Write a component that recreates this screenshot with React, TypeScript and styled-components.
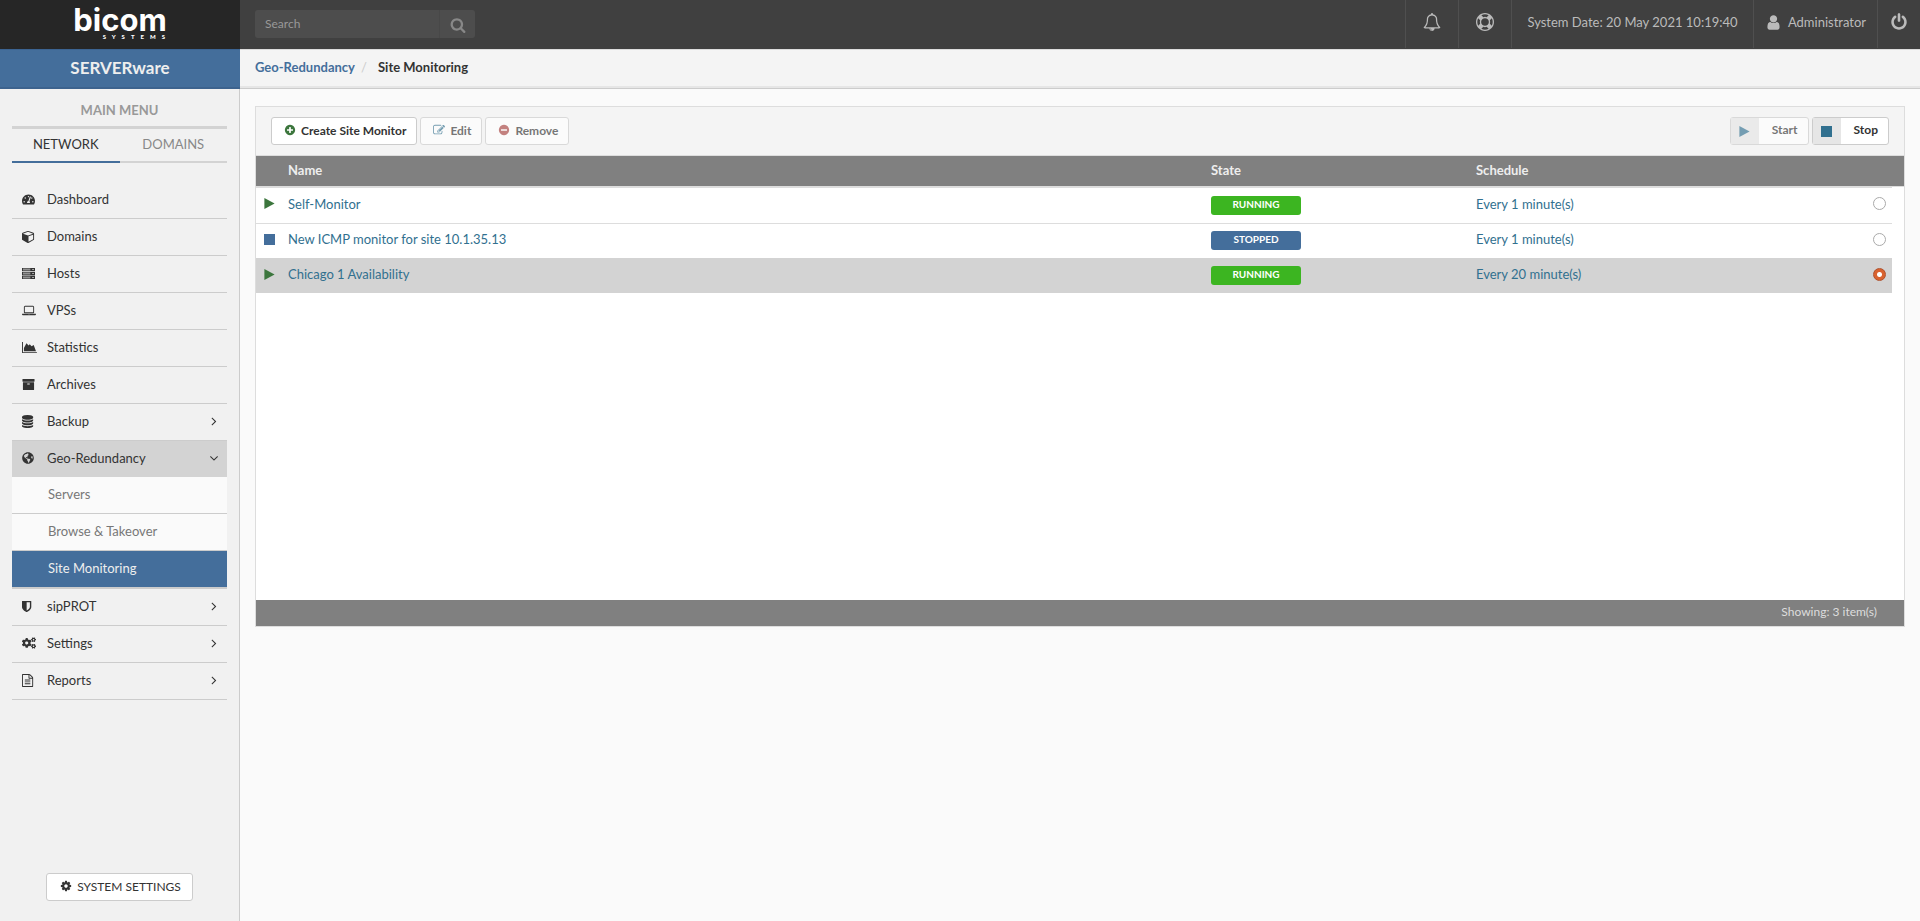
import React, { useState } from "react";
import styled, { createGlobalStyle, css } from "styled-components";
import { FaTachometerAlt, FaGlobeAmericas, FaCogs } from "react-icons/fa";

const Global = createGlobalStyle`
  * { box-sizing: border-box; }
  html, body { margin: 0; padding: 0; }
  body {
    background: #fafafa;
    color: #333;
    font-family: Lato, "Liberation Sans", sans-serif;
    font-size: 13px;
    line-height: 20px;
  }
  button, input { font-family: inherit; }
  a { text-decoration: none; }
`;

/* ---------- icons ---------- */

const DISC =
  "q0 209-103 385.500t-279.500 279.500-385.500 103-385.500-103-279.500-279.500-103-385.500 103-385.500 279.500-279.500 385.500-103 385.500 103 279.500 279.500 103 385.500z";

const ICONS = {
  power:
    "M1664 896q0 156-61 298t-164 245-245 164-298 61-298-61-245-164-164-245-61-298q0-182 80.500-343t226.500-270q43-32 95.500-25t83.500 50q32 42 24.500 94.500t-49.500 84.500q-98 74-151.500 181t-53.500 228q0 104 40.500 198.500t109.500 163.500 163.500 109.500 198.500 40.500 198.500-40.500 163.500-109.500 109.500-163.500 40.500-198.500q0-121-53.500-228t-151.500-181q-42-32-49.500-84.500t24.500-94.500q31-43 84-50t95 25q146 109 226.500 270t80.500 343zm-640-768v640q0 52-38 90t-90 38-90-38-38-90v-640q0-52 38-90t90-38 90 38 38 90z",
  search:
    "M1216 832q0-185-131.500-316.500t-316.500-131.500-316.500 131.500-131.500 316.500 131.500 316.500 316.500 131.500 316.500-131.500 131.500-316.500zm512 832q0 52-38 90t-90 38q-54 0-90-38l-343-342q-179 124-399 124-143 0-273.500-55.500t-225-150-150-225-55.500-273.500 55.500-273.500 150-225 225-150 273.500-55.500 273.500 55.500 225 150 150 225 55.500 273.500q0 220-124 399l343 343q37 37 37 90z",
  plus:
    "M1344 960v-128q0-26-19-45t-45-19h-256v-256q0-26-19-45t-45-19h-128q-26 0-45 19t-19 45v256h-256q-26 0-45 19t-19 45v128q0 26 19 45t45 19h256v256q0 26 19 45t45 19h128q26 0 45-19t19-45v-256h256q26 0 45-19t19-45zm320-64" + DISC,
  minus:
    "M1344 960v-128q0-26-19-45t-45-19h-768q-26 0-45 19t-19 45v128q0 26 19 45t45 19h768q26 0 45-19t19-45zm320-64" + DISC,
  angleRight:
    "M1171 960q0 13-10 23l-466 466q-10 10-23 10t-23-10l-50-50q-10-10-10-23t10-23l393-393-393-393q-10-10-10-23t10-23l50-50q10-10 23-10t23 10l466 466q10 10 10 23z",
  angleDown:
    "M1395 736q0 13-10 23l-466 466q-10 10-23 10t-23-10l-466-466q-10-10-10-23t10-23l50-50q10-10 23-10t23 10l393 393 393-393q10-10 23-10t23 10l50 50q10 10 10 23z",
  cog:
    "M1152 896q0-106-75-181t-181-75-181 75-75 181 75 181 181 75 181-75 75-181zm512-109v222q0 12-8 23t-20 13l-185 28q-19 54-39 91 35 50 107 138 10 12 10 25t-9 23q-27 37-99 108t-94 71q-12 0-26-9l-138-108q-44 23-91 38-16 136-29 186-7 28-36 28h-222q-14 0-24.500-8.500t-11.500-21.500l-28-184q-49-16-90-37l-141 107q-10 9-25 9-14 0-25-11-126-114-165-168-7-10-7-23 0-12 8-23 15-21 51-66.500t54-70.500q-27-50-41-99l-183-27q-13-2-21-12.500t-8-23.500v-222q0-12 8-23t19-13l186-28q14-46 39-92-40-57-107-138-10-12-10-24 0-10 9-23 26-36 98.500-107.500t94.500-71.500q13 0 26 10l138 107q44-23 91-38 16-136 29-186 7-28 36-28h222q14 0 24.500 8.500t11.500 21.500l28 184q49 16 90 37l142-107q9-9 24-9 13 0 25 10 129 119 165 170 7 8 7 22 0 12-8 23-15 21-51 66.500t-54 70.500q26 50 41 98l183 28q13 2 21 12.500t8 23.500z",
  user:
    "M1536 1399q0 109-62.500 187t-150.500 78h-854q-88 0-150.500-78t-62.500-187q0-85 8.500-160.500t31.500-152 58.500-131 94-89 134.500-34.500q131 128 313 128t313-128q76 0 134.500 34.500t94 89 58.500 131 31.500 152 8.500 160.500zm-256-887q0 159-112.500 271.500t-271.500 112.500-271.500-112.500-112.500-271.500 112.500-271.500 271.500-112.500 271.500 112.500 112.500 271.500z",
  lifeRing:
    "M896 0q182 0 348 71t286 191 191 286 71 348-71 348-191 286-286 191-348 71-348-71-286-191-191-286-71-348 71-348 191-286 286-191 348-71zm0 128q-190 0-361 90l194 194q82-28 167-28t167 28l194-194q-171-90-361-90zm-678 1129l194-194q-28-82-28-167t28-167l-194-194q-90 171-90 361t90 361zm678 407q190 0 361-90l-194-194q-82 28-167 28t-167-28l-194 194q171 90 361 90zm0-384q159 0 271.500-112.500t112.500-271.500-112.500-271.500-271.500-112.500-271.500 112.500-112.500 271.500 112.500 271.500 271.500 112.500zm484-217l194 194q90-171 90-361t-90-361l-194 194q28 82 28 167t-28 167z",
  bell:
    "M912 1696q0-16-16-16-59 0-101.500-42.500t-42.500-101.500q0-16-16-16t-16 16q0 73 51.500 124.500t124.500 51.500q16 0 16-16zm-666-288h1300q-266-300-266-832 0-51-24-105t-69-103-121.500-80.500-169.500-31.500-169.500 31.500-121.500 80.500-69 103-24 105q0 532-266 832zm1482 0q0 52-38 90t-90 38h-448q0 106-75 181t-181 75-181-75-75-181h-448q-52 0-90-38t-38-90q50-42 91-88t85-119.500 74.500-158.500 50-206 19.500-260q0-152 117-282.500t307-158.500q-8-19-8-39 0-40 28-68t68-28 68 28 28 68q0 20-8 39 190 28 307 158.500t117 282.500q0 139 19.500 260t50 206 74.500 158.500 85 119.500 91 88z",
  edit:
    "M888 1184l116-116-152-152-116 116v56h96v96h56zm440-720q-16-16-33 1l-350 350q-17 17-1 33t33-1l350-350q17-17 1-33zm80 594v190q0 119-84.500 203.500t-203.500 84.500h-832q-119 0-203.500-84.500t-84.500-203.500v-832q0-119 84.500-203.500t203.500-84.500h832q63 0 117 25 15 7 18 23 3 17-9 29l-49 49q-14 14-32 8-23-6-45-6h-832q-66 0-113 47t-47 113v832q0 66 47 113t113 47h832q66 0 113-47t47-113v-126q0-13 9-22l64-64q15-15 35-7t20 29zm-96-738l288 288-672 672h-288v-288zm444 132l-92 92-288-288 92-92q28-28 68-28t68 28l152 152q28 28 28 68t-28 68z",
  cube:
    "M896 1629l640-349v-636l-640 233v752zm-64-865l698-254-698-254-698 254zm832-252v768q0 35-18 65t-49 47l-704 384q-28 16-61 16t-61-16l-704-384q-31-17-49-47t-18-65v-768q0-40 23-73t61-47l704-256q22-8 44-8t44 8l704 256q38 14 61 47t23 73z",
  server:
    "M0 128h1792v448h-1792zM128 256v64h1024v-64zM128 384v64h1024v-64zM1440 288v128h160v-128zM0 672h1792v448h-1792zM128 800v64h1024v-64zM128 928v64h1024v-64zM1440 832v128h160v-128zM0 1216h1792v448h-1792zM128 1344v64h1024v-64zM128 1472v64h1024v-64zM1440 1376v128h160v-128z",
  laptop:
    "M416 1280q-66 0-113-47t-47-113v-704q0-66 47-113t113-47h1088q66 0 113 47t47 113v704q0 66-47 113t-113 47h-1088zm-32-864v704q0 13 9.500 22.500t22.500 9.500h1088q13 0 22.500-9.500t9.500-22.500v-704q0-13-9.500-22.500t-22.500-9.500h-1088q-13 0-22.500 9.500t-9.500 22.500zm1376 928h160v96q0 40-47 68t-113 28h-1600q-66 0-113-28t-47-68v-96h1760zm-720 96q16 0 16-16t-16-16h-160q-16 0-16 16t16 16h160z",
  area:
    "M2048 1536v128h-2048v-1536h128v1408h1920zM256 1408v-448l352-640 288 288 160-160 256 288 288-192 320 864z",
  archive:
    "M1088 832q0-26-19-45t-45-19h-256q-26 0-45 19t-19 45 19 45 45 19h256q26 0 45-19t19-45zm576-192v960q0 26-19 45t-45 19h-1408q-26 0-45-19t-19-45v-960q0-26 19-45t45-19h1408q26 0 45 19t19 45zm64-448v256q0 26-19 45t-45 19h-1536q-26 0-45-19t-19-45v-256q0-26 19-45t45-19h1536q26 0 45 19t19 45z",
  database:
    "M896 768q237 0 443-43t325-127v170q0 69-103 128t-280 93.500-385 34.500-385-34.500-280-93.500-103-128v-170q119 84 325 127t443 43zm0 768q237 0 443-43t325-127v170q0 69-103 128t-280 93.500-385 34.500-385-34.500-280-93.500-103-128v-170q119 84 325 127t443 43zm0-384q237 0 443-43t325-127v170q0 69-103 128t-280 93.500-385 34.500-385-34.500-280-93.500-103-128v-170q119 84 325 127t443 43zm0-1152q208 0 385 34.500t280 93.500 103 128v128q0 69-103 128t-280 93.500-385 34.500-385-34.500-280-93.500-103-128v-128q0-69 103-128t280-93.500 385-34.500z",
  shield:
    "M1344 960v-640h-448v1137q119-63 213-137 235-184 235-360zm192-768v768q0 86-33.500 170.500t-83 150-118 127.500-126.500 103-121 77.500-89.500 49.500-42.500 20q-12 6-26 6t-26-6q-16-7-42.500-20t-89.500-49.500-121-77.500-126.500-103-118-127.500-83-150-33.500-170.500v-768q0-26 19-45t45-19h1152q26 0 45 19t19 45z",
  file:
    "M1596 380q28 28 48 76t20 88v1152q0 40-28 68t-68 28h-1344q-40 0-68-28t-28-68v-1600q0-40 28-68t68-28h896q40 0 88 20t76 48zm-444-244v376h376q-10-29-22-41l-313-313q-12-12-41-22zm384 1528v-1024h-416q-40 0-68-28t-28-68v-416h-768v1536h1280zm-1024-864q0-14 9-23t23-9h704q14 0 23 9t9 23v64q0 14-9 23t-23 9h-704q-14 0-23-9t-9-23v-64zm736 224q14 0 23 9t9 23v64q0 14-9 23t-23 9h-704q-14 0-23-9t-9-23v-64q0-14 9-23t23-9h704zm0 256q14 0 23 9t9 23v64q0 14-9 23t-23 9h-704q-14 0-23-9t-9-23v-64q0-14 9-23t23-9h704z",
  play: "M64 0l1664 896-1664 896z",
  stop: "M0 0h1792v1792h-1792z",
};

type IconName = keyof typeof ICONS;

const Svg = styled.svg`
  display: block;
  flex: none;
  fill: currentColor;
`;

interface IconProps {
  name: IconName;
  size?: number;
  box?: number;
  left?: number;
}

const Icon = ({ name, size = 14, box = 1792, left = 0 }: IconProps) => (
  <Svg
    height={size}
    width={Math.round((size * box) / 1792)}
    viewBox={`${left} 0 ${box} 1792`}
    fillRule="evenodd"
    aria-hidden="true"
  >
    <path d={ICONS[name]} />
  </Svg>
);

/* ---------- page frame ---------- */

const Page = styled.div`
  display: grid;
  grid-template-columns: 240px minmax(0, 1fr);
  min-height: 100vh;
`;

const Sidebar = styled.aside`
  display: flex;
  flex-direction: column;
  background: #f1f1f1;
`;

const Content = styled.div`
  display: flex;
  flex-direction: column;
`;

const Brand = styled.a`
  display: flex;
  flex-direction: column;
  align-items: center;
  height: 49px;
  padding-top: 5px;
  background: #262626;
  color: #fff;
`;

const BrandName = styled.span`
  font: 700 31px/29px Inter, sans-serif;
`;

const BrandSub = styled.span`
  align-self: flex-end;
  margin-right: 69px;
  font: 900 6px/6px Lato, sans-serif;
  letter-spacing: 6px;
`;

const Product = styled.div`
  height: 40px;
  border-top: 1px solid #3c6492;
  border-bottom: 2px solid #3d638e;
  background: #446e9b;
  color: #eee;
  font-size: 17px;
  font-weight: 700;
  line-height: 36px;
  text-align: center;
`;

const SideBody = styled.div`
  display: flex;
  flex: 1;
  flex-direction: column;
  padding: 11px 12px 20px;
  border-right: 1px solid #ccc;
`;

const MenuTitle = styled.h2`
  margin: 0;
  padding-bottom: 6px;
  border-bottom: 3px solid #d3d3d3;
  color: #999;
  font-size: 13px;
  font-weight: 700;
  line-height: 20px;
  text-align: center;
`;

const Tabs = styled.div`
  display: flex;
  margin-bottom: 19px;
`;

const Tab = styled.button<{ $on?: boolean }>`
  flex: 1;
  height: 34px;
  padding: 0 0 2px;
  border: 0;
  border-bottom: 2px solid ${(p) => (p.$on ? "#446e9b" : "#d3d3d3")};
  background: none;
  color: ${(p) => (p.$on ? "#333" : "#888")};
  font-size: 13px;
`;

const Menu = styled.ul`
  margin: 0;
  padding: 0;
  list-style: none;
`;

const MenuLink = styled.a<{ $open?: boolean }>`
  display: flex;
  align-items: center;
  height: ${(p) => (p.$open ? "36px" : "37px")};
  padding: 0 6px 2px 10px;
  border-bottom: ${(p) => (p.$open ? "0" : "1px solid #ccc")};
  background: ${(p) => (p.$open ? "#d3d3d3" : "transparent")};
  color: #333;
`;

const MenuIcon = styled.span`
  display: flex;
  width: 25px;
`;

const Label = styled.span`
  flex: 1;
`;

const SubMenu = styled.ul`
  margin: 0;
  padding: 0;
  border-bottom: 1px solid #ccc;
  list-style: none;
`;

const SubLink = styled.a<{ $on?: boolean }>`
  display: block;
  height: 37px;
  padding-left: 36px;
  border-bottom: 1px solid #ccc;
  background: ${(p) => (p.$on ? "#446e9b" : "#fafafa")};
  color: ${(p) => (p.$on ? "#eee" : "#777")};
  line-height: 35px;
`;

const SettingsButton = styled.button`
  display: flex;
  align-items: center;
  align-self: center;
  gap: 5px;
  height: 28px;
  margin-top: auto;
  padding: 0 11px 2px 13px;
  border: 1px solid #ccc;
  border-radius: 3px;
  background: #fff;
  color: #333;
  font-size: 12px;
`;

/* ---------- top bar ---------- */

const TopBar = styled.header`
  display: flex;
  justify-content: space-between;
  height: 49px;
  background: #404040;
`;

const SearchBox = styled.form`
  display: flex;
  width: 220px;
  height: 28px;
  margin: 10px 0 0 15px;
  border-radius: 3px;
  background: #4d4d4d;
`;

const SearchInput = styled.input`
  flex: 1;
  min-width: 0;
  padding: 0 10px 2px;
  border: 0;
  background: none;
  color: #ccc;
  font-size: 12px;
  &::placeholder { color: #999; opacity: 1; }
`;

const SearchButton = styled.button`
  display: flex;
  align-items: center;
  justify-content: center;
  width: 36px;
  padding: 2px 0 0;
  border: 0;
  border-left: 1px solid #484848;
  background: none;
  color: #888;
`;

const TopItems = styled.div`
  display: flex;
`;

const topItem = css<{ $w: number }>`
  display: flex;
  align-items: center;
  justify-content: center;
  width: ${(p) => p.$w}px;
  height: 48px;
  padding: 0 0 4px;
  border: 0;
  border-left: 1px solid #4f4f4f;
  background: none;
  color: #bbb;
  font-size: 13px;
`;

const TopButton = styled.button<{ $w: number }>`
  ${topItem}
  gap: 6px;
`;

const TopText = styled.div<{ $w: number }>`
  ${topItem}
`;

const Crumbs = styled.nav`
  display: flex;
  align-items: flex-start;
  height: 40px;
  padding: 7px 15px 0;
  border-top: 1px solid #ddd;
  border-bottom: 1px solid #ccc;
  background: #f4f4f4;
  box-shadow: inset 0 -2px #e6e6e6;
  font-weight: 700;
`;

const CrumbLink = styled.a`
  color: #446e9b;
`;

const Slash = styled.span`
  width: 23px;
  padding-left: 6px;
  color: #ccc;
  font-weight: 400;
`;

/* ---------- panel ---------- */

const Panel = styled.main`
  display: flex;
  flex-direction: column;
  margin: 17px 15px 0;
  border: 1px solid #ddd;
  background: #fff;
`;

const Toolbar = styled.div`
  display: flex;
  gap: 3px;
  padding: 10px 15px;
  border-bottom: 1px solid #ddd;
  background: #f4f4f4;
`;

const Spacer = styled.span`
  flex: 1;
`;

const ToolButton = styled.button`
  display: flex;
  align-items: center;
  gap: 5px;
  height: 28px;
  padding: 0 10px 2px 12px;
  border: 1px solid #ccc;
  border-radius: 3px;
  background: #fff;
  color: #333;
  font-size: 12px;
  font-weight: 700;
  &:disabled { opacity: 0.65; }
`;

const SplitButton = styled(ToolButton)`
  align-items: stretch;
  gap: 13px;
  padding: 0 10px 0 0;
  line-height: 24px;
`;

const SplitIcon = styled.span`
  display: flex;
  align-items: center;
  justify-content: center;
  width: 28px;
  background: #e6e6e6;
  color: #31708f;
`;

const Tint = styled.span<{ $c: string }>`
  display: flex;
  color: ${(p) => p.$c};
`;

const TableArea = styled.div`
  min-height: 444px;
`;

const Table = styled.table`
  width: 100%;
  border-collapse: separate;
  border-spacing: 0;
  table-layout: fixed;
`;

const Th = styled.th<{ $w?: string }>`
  width: ${(p) => p.$w || "auto"};
  height: 31px;
  padding: 0 0 2px 8px;
  border-bottom: 1px solid #ddd;
  background: #808080;
  color: #eee;
  font-weight: 700;
  text-align: left;
`;

const Td = styled.td`
  height: 35px;
  padding: 0 6px 4px 8px;
`;

const Row = styled.tr<{ $on: boolean }>`
  > td {
    border-top: 1px solid ${(p) => (p.$on ? "#d3d3d3" : "#ddd")};
    background: ${(p) => (p.$on ? "#d3d3d3" : "#fff")};
  }
  &:first-child > td { height: 36px; }
`;

const CellLink = styled.a`
  color: #31708f;
`;

const Badge = styled.span<{ $run: boolean }>`
  display: block;
  width: 90px;
  height: 19px;
  margin-top: 3px;
  border-radius: 3px;
  background: ${(p) => (p.$run ? "#3cb521" : "#446e9b")};
  color: #fff;
  font-size: 10px;
  font-weight: 700;
  line-height: 17px;
  text-align: center;
`;

const Radio = styled.input`
  display: block;
  width: 13px;
  height: 13px;
  margin: 0 0 0 auto;
  border: 1px solid #aaa;
  border-radius: 50%;
  appearance: none;
  background: #fff;
  &:checked {
    border-color: #b0502c;
    background: radial-gradient(circle, #fff 0 2px, #d9622f 3px);
  }
`;

const Footer = styled.footer`
  height: 26px;
  padding: 0 27px 0 0;
  background: #808080;
  color: #ddd;
  font-size: 12px;
  line-height: 23px;
  text-align: right;
`;

/* ---------- data ---------- */

const rows = [
  { name: "Self-Monitor", running: true, schedule: "Every 1 minute(s)" },
  { name: "New ICMP monitor for site 10.1.35.13", running: false, schedule: "Every 1 minute(s)" },
  { name: "Chicago 1 Availability", running: true, schedule: "Every 20 minute(s)" },
];

const menu: { label: string; icon: React.ReactNode; expands?: boolean; children?: string[] }[] = [
  { label: "Dashboard", icon: <FaTachometerAlt size={13} /> },
  { label: "Domains", icon: <Icon name="cube" size={13} /> },
  { label: "Hosts", icon: <Icon name="server" size={13} /> },
  { label: "VPSs", icon: <Icon name="laptop" size={13} box={1920} /> },
  { label: "Statistics", icon: <Icon name="area" size={13} box={2048} /> },
  { label: "Archives", icon: <Icon name="archive" size={13} /> },
  { label: "Backup", icon: <Icon name="database" size={13} left={128} />, expands: true },
  {
    label: "Geo-Redundancy",
    icon: <FaGlobeAmericas size={12} />,
    expands: true,
    children: ["Servers", "Browse & Takeover", "Site Monitoring"],
  },
  { label: "sipPROT", icon: <Icon name="shield" size={13} left={256} />, expands: true },
  { label: "Settings", icon: <FaCogs size={14} />, expands: true },
  { label: "Reports", icon: <Icon name="file" size={13} left={128} />, expands: true },
];

export default function App() {
  const [selected, setSelected] = useState(2);

  return (
    <>
      <Global />
      <Page>
        <Sidebar>
          <Brand href="#" aria-label="bicom systems">
            <BrandName>bicom</BrandName>
            <BrandSub>SYSTEMS</BrandSub>
          </Brand>
          <Product>SERVERware</Product>
          <SideBody>
            <MenuTitle>MAIN MENU</MenuTitle>
            <Tabs>
              <Tab $on>NETWORK</Tab>
              <Tab>DOMAINS</Tab>
            </Tabs>
            <Menu>
              {menu.map((m) => (
                <li key={m.label}>
                  <MenuLink href="#" $open={!!m.children}>
                    <MenuIcon>{m.icon}</MenuIcon>
                    <Label>{m.label}</Label>
                    {m.expands && <Icon name={m.children ? "angleDown" : "angleRight"} size={14} />}
                  </MenuLink>
                  {m.children && (
                    <SubMenu>
                      {m.children.map((c) => (
                        <li key={c}>
                          <SubLink href="#" $on={c === "Site Monitoring"}>{c}</SubLink>
                        </li>
                      ))}
                    </SubMenu>
                  )}
                </li>
              ))}
            </Menu>
            <SettingsButton>
              <Icon name="cog" size={12} />
              SYSTEM SETTINGS
            </SettingsButton>
          </SideBody>
        </Sidebar>

        <Content>
          <TopBar>
            <SearchBox onSubmit={(e) => e.preventDefault()}>
              <SearchInput placeholder="Search" aria-label="Search" />
              <SearchButton aria-label="Search"><Icon name="search" size={16} /></SearchButton>
            </SearchBox>
            <TopItems>
              <TopButton $w={53} aria-label="Notifications"><Icon name="bell" size={18} /></TopButton>
              <TopButton $w={53} aria-label="Help"><Icon name="lifeRing" size={18} /></TopButton>
              <TopText $w={242}>System Date: 20 May 2021 10:19:40</TopText>
              <TopButton $w={124}><Icon name="user" size={17} />Administrator</TopButton>
              <TopButton $w={43} aria-label="Log out"><Icon name="power" size={18} /></TopButton>
            </TopItems>
          </TopBar>
          <Crumbs aria-label="Breadcrumb">
            <CrumbLink href="#">Geo-Redundancy</CrumbLink>
            <Slash>/</Slash>
            <span>Site Monitoring</span>
          </Crumbs>

          <Panel>
            <Toolbar>
              <ToolButton>
                <Tint $c="#3c763d"><Icon name="plus" size={12} /></Tint>
                Create Site Monitor
              </ToolButton>
              <ToolButton disabled>
                <Tint $c="#31708f"><Icon name="edit" size={12} /></Tint>
                Edit
              </ToolButton>
              <ToolButton disabled>
                <Tint $c="#a94442"><Icon name="minus" size={12} /></Tint>
                Remove
              </ToolButton>
              <Spacer />
              <SplitButton disabled>
                <SplitIcon><Icon name="play" size={11} /></SplitIcon>
                Start
              </SplitButton>
              <SplitButton>
                <SplitIcon><Icon name="stop" size={11} /></SplitIcon>
                Stop
              </SplitButton>
            </Toolbar>
            <TableArea>
              <Table>
                <thead>
                  <tr>
                    <Th $w="24px" aria-label="Status" />
                    <Th>Name</Th>
                    <Th $w="265px">State</Th>
                    <Th $w="390px">Schedule</Th>
                    <Th $w="34px" aria-label="Select" />
                    <Th $w="12px" aria-hidden="true" />
                  </tr>
                </thead>
                <tbody>
                  {rows.map((r, i) => (
                    <Row key={r.name} $on={i === selected}>
                      <Td>
                        <Tint $c={r.running ? "#3c763d" : "#446e9b"}>
                          <Icon name={r.running ? "play" : "stop"} size={11} />
                        </Tint>
                      </Td>
                      <Td><CellLink href="#">{r.name}</CellLink></Td>
                      <Td><Badge $run={r.running}>{r.running ? "RUNNING" : "STOPPED"}</Badge></Td>
                      <Td><CellLink href="#">{r.schedule}</CellLink></Td>
                      <Td>
                        <Radio
                          type="radio"
                          name="monitor"
                          aria-label={r.name}
                          checked={i === selected}
                          onChange={() => setSelected(i)}
                        />
                      </Td>
                    </Row>
                  ))}
                </tbody>
              </Table>
            </TableArea>
            <Footer>Showing: 3 item(s)</Footer>
          </Panel>
        </Content>
      </Page>
    </>
  );
}
